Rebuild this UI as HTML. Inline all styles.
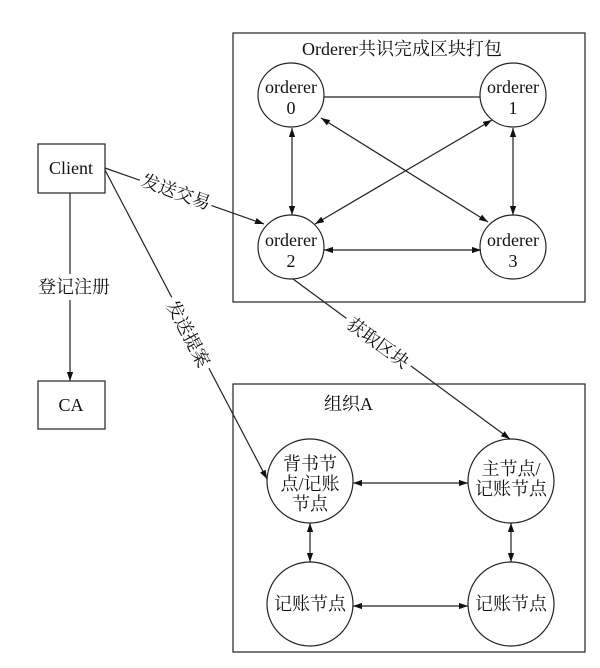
<!DOCTYPE html>
<html><head><meta charset="utf-8"><style>
html,body{margin:0;padding:0;background:#fff}
svg{display:block}
text{font-family:"Liberation Serif","Noto Serif CJK SC",serif;font-size:18px;fill:#111}
</style></head><body>
<svg width="600" height="668" viewBox="0 0 600 668" xmlns="http://www.w3.org/2000/svg">
<defs>
<marker id="a" viewBox="0 0 10 10" refX="10" refY="5" markerWidth="9" markerHeight="9" orient="auto-start-reverse" markerUnits="userSpaceOnUse"><path d="M0,1.5 L10,5 L0,8.5 z" fill="#111"/></marker>
</defs>
<g stroke="#222" stroke-width="1.2" fill="none">
<rect x="233" y="33" width="352" height="269"/>
<rect x="233" y="384" width="352" height="268"/>
<rect x="38" y="144" width="67" height="49"/>
<rect x="38" y="381" width="67" height="48"/>
<ellipse cx="291" cy="95" rx="33" ry="32"/>
<ellipse cx="513" cy="95" rx="33" ry="32"/>
<ellipse cx="291" cy="247" rx="33" ry="32"/>
<ellipse cx="513" cy="247" rx="33" ry="32"/>
<ellipse cx="310" cy="481" rx="43" ry="42"/>
<ellipse cx="511" cy="481" rx="43" ry="42"/>
<ellipse cx="310" cy="604" rx="43" ry="42"/>
<ellipse cx="511" cy="604" rx="43" ry="42"/>
<line x1="324" y1="97" x2="480" y2="97"/>
<line x1="292" y1="128" x2="292" y2="215" marker-start="url(#a)" marker-end="url(#a)"/>
<line x1="513" y1="128" x2="513" y2="215" marker-start="url(#a)" marker-end="url(#a)"/>
<line x1="324" y1="250" x2="481" y2="250" marker-start="url(#a)" marker-end="url(#a)"/>
<line x1="321" y1="118" x2="488" y2="222" marker-start="url(#a)" marker-end="url(#a)"/>
<line x1="492" y1="120" x2="315" y2="224" marker-start="url(#a)" marker-end="url(#a)"/>
<line x1="105" y1="168" x2="264" y2="224" marker-end="url(#a)"/>
<line x1="105" y1="170" x2="267" y2="479" marker-end="url(#a)"/>
<line x1="293" y1="279" x2="510" y2="439" marker-end="url(#a)"/>
<line x1="70" y1="193" x2="70" y2="381" marker-end="url(#a)"/>
<line x1="353" y1="483" x2="468" y2="483" marker-start="url(#a)" marker-end="url(#a)"/>
<line x1="353" y1="606" x2="468" y2="606" marker-start="url(#a)" marker-end="url(#a)"/>
<line x1="310" y1="523" x2="310" y2="562" marker-start="url(#a)" marker-end="url(#a)"/>
<line x1="511" y1="523" x2="511" y2="562" marker-start="url(#a)" marker-end="url(#a)"/>
</g>
<rect x="34" y="274" width="84" height="26" fill="#fff"/>
<g transform="translate(176,192) rotate(19.7)"><rect x="-38" y="-12" width="76" height="24" fill="#fff"/><text text-anchor="middle" y="6">发送交易</text></g>
<g transform="translate(188,334) rotate(62.3)"><rect x="-40" y="-12" width="80" height="24" fill="#fff"/><text text-anchor="middle" y="6">发送提案</text></g>
<g transform="translate(378,343) rotate(36.4)"><rect x="-40" y="-12" width="80" height="24" fill="#fff"/><text text-anchor="middle" y="6">获取区块</text></g>
<text x="402" y="55" text-anchor="middle">Orderer共识完成区块打包</text>
<g text-anchor="middle">
<text x="291" y="93">orderer</text><text x="291" y="114">0</text>
<text x="513" y="93">orderer</text><text x="513" y="114">1</text>
<text x="291" y="246">orderer</text><text x="291" y="267">2</text>
<text x="513" y="246">orderer</text><text x="513" y="267">3</text>
<text x="71" y="174">Client</text>
<text x="71" y="411">CA</text>
<text x="74" y="293">登记注册</text>
<text x="310" y="470">背书节</text><text x="310" y="490">点/记账</text><text x="310" y="510">节点</text>
<text x="511" y="475">主节点/</text><text x="511" y="495">记账节点</text>
<text x="310" y="610">记账节点</text>
<text x="511" y="610">记账节点</text>
</g>
<text x="324" y="410">组织A</text>
</svg>
</body></html>
